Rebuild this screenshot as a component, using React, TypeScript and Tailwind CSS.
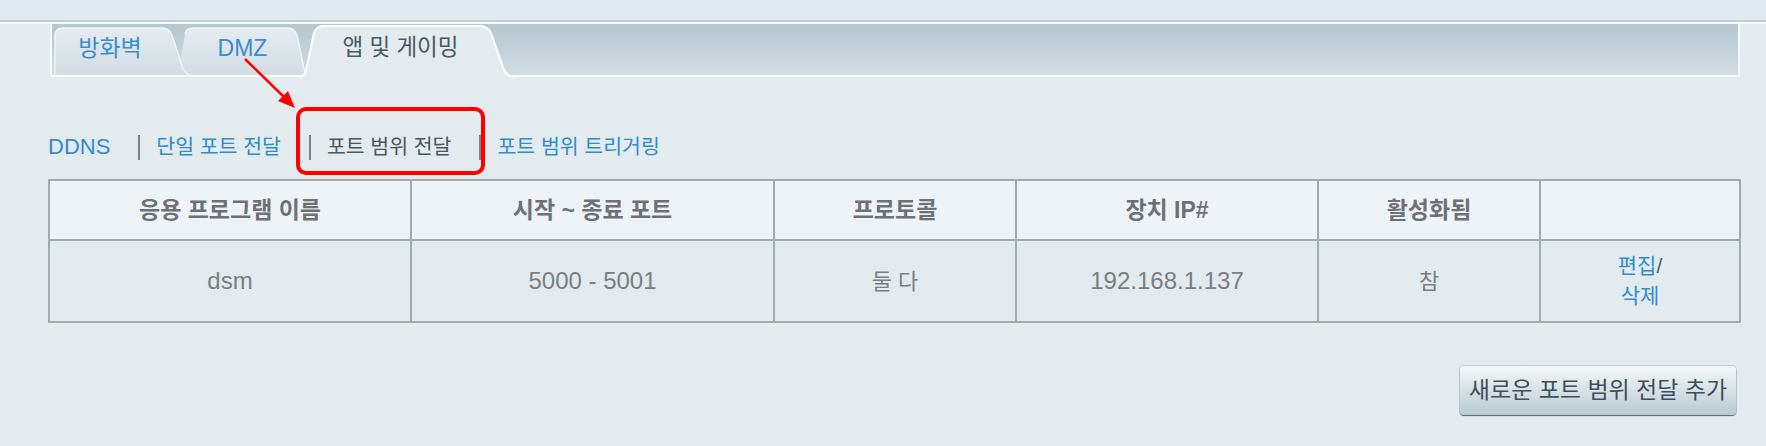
import React from 'react'

const font = "font-['Liberation_Sans','Noto_Sans_CJK_KR',sans-serif]"

function TabShapes() {
  return (
    <svg className="absolute left-0 top-0 overflow-visible" width="500" height="53" viewBox="0 0 500 53">
      <defs>
        <linearGradient id="tabIdle" x1="0" y1="0" x2="0" y2="1">
          <stop offset="0" stopColor="#e4ebf0" />
          <stop offset="1" stopColor="#d3dde3" />
        </linearGradient>
      </defs>
      {/* DMZ tab sits underneath its neighbours */}
      <path d="M126,51 L133,10 Q134,4 141,4 L236,4 Q243,4 245,11 L252,45 Q254,51 260,51 Z" fill="url(#tabIdle)" />
      <path d="M133,10 Q134,4 141,4 L236,4 Q243,4 245,11 L252,45 Q254,51 260,51" fill="none" stroke="#f0f4f6" strokeWidth="1.5" />
      <path d="M3,51 L3,12 Q3,4 11,4 L110,4 Q117,4 120,11 L131,45 Q134,51 140,51 Z" fill="url(#tabIdle)" />
      <path d="M3,51 L3,12 Q3,4 11,4 L110,4 Q117,4 120,11 L131,45 Q134,51 140,51" fill="none" stroke="#f0f4f6" strokeWidth="1.5" />
      <path d="M246,53 Q252,53 254,47 L262,9 Q264,2 272,2 L428,2 Q436,2 439,9 L452,46 Q455,53 463,53 Z" fill="#e4ebef" />
      <path d="M246,53 Q252,53 254,47 L262,9 Q264,2 272,2 L428,2 Q436,2 439,9 L452,46 Q455,53 463,53" fill="none" stroke="#ffffff" strokeWidth="2" />
    </svg>
  )
}

function Sep() {
  return <span className="ml-[28px] mr-[16px] h-[25px] w-[2px] bg-[#7f8284]" />
}

export default function App() {
  return (
    <div className={`relative h-[446px] w-full overflow-hidden bg-[#e4ebef] ${font}`}>
      <div className="h-[20px] bg-[#e0e9ef]" />
      <div className="h-[2px] bg-[#c4cdd4]" />
      <div className="h-[2px] bg-[#f6f9fa]" />

      <div className="pl-[48px] pr-[26px]">
        {/* tab bar */}
        <div className="relative ml-[2px] h-[53px] border-x-2 border-b-2 border-[#f7fafb] bg-gradient-to-b from-[#b4c6ce] to-[#d1dee4]">
          <TabShapes />
          <div className="relative flex pl-[3px] pt-[9px] leading-[30px]">
            <div className="w-[110px] text-center text-[23px] text-[#3a8dcf]">방화벽</div>
            <div className="w-[155px] text-center text-[23px] text-[#3a8dcf]">DMZ</div>
            <div className="w-[161px] text-center text-[22.5px] text-[#4a5863]">앱 및 게이밍</div>
          </div>
        </div>

        {/* sub navigation */}
        <div className="mt-[57px] flex h-[26px] items-center leading-none">
          <span className="text-[22px] text-[#2f8cce]">DDNS</span>
          <Sep />
          <span className="text-[20.5px] text-[#2f8cce]">단일 포트 전달</span>
          <Sep />
          <span className="text-[20.5px] text-[#4a5660]">포트 범위 전달</span>
          <Sep />
          <span className="text-[20.5px] text-[#2f8cce]">포트 범위 트리거링</span>
        </div>

        <table className="mt-[19px] w-[1691px] table-fixed border-collapse border-2 border-[#9eabb3]">
          <colgroup>
            <col className="w-[362px]" />
            <col className="w-[363px]" />
            <col className="w-[242px]" />
            <col className="w-[302px]" />
            <col className="w-[222px]" />
            <col className="w-[200px]" />
          </colgroup>
          <thead>
            <tr className="h-[60px] bg-[#eef3f7] text-[23px] font-bold text-[#6d7175]">
              <th className="border-2 border-[#9eabb3]">응용 프로그램 이름</th>
              <th className="border-2 border-[#9eabb3]">시작 ~ 종료 포트</th>
              <th className="border-2 border-[#9eabb3]">프로토콜</th>
              <th className="border-2 border-[#9eabb3]">장치 IP#</th>
              <th className="border-2 border-[#9eabb3]">활성화됨</th>
              <th className="border-2 border-[#9eabb3]" />
            </tr>
          </thead>
          <tbody>
            <tr className="h-[82px] bg-[#e3eaee] text-center text-[24px] text-[#7a7e82]">
              <td className="border-2 border-[#9eabb3]">dsm</td>
              <td className="border-2 border-[#9eabb3]">5000 - 5001</td>
              <td className="border-2 border-[#9eabb3] text-[22px]">둘 다</td>
              <td className="border-2 border-[#9eabb3]">192.168.1.137</td>
              <td className="border-2 border-[#9eabb3] text-[22px]">참</td>
              <td className="border-2 border-[#9eabb3] text-[21px] leading-[30px]">
                <div>
                  <span className="text-[#2f8cce]">편집</span>
                  <span className="text-[#4f5b64]">/</span>
                </div>
                <div className="text-[#2f8cce]">삭제</div>
              </td>
            </tr>
          </tbody>
        </table>

        <div className="mt-[43px] flex justify-end pr-[4px]">
          <button className="h-[49px] w-[276px] rounded-[4px] bg-gradient-to-b from-[#f5f8fa] to-[#b8cad1] text-[23px] text-[#3e4e5a] shadow-[0_1px_1px_rgba(40,55,65,0.7),0_0_0_1px_rgba(130,150,160,0.35)]">
            새로운 포트 범위 전달 추가
          </button>
        </div>
      </div>

      {/* annotation: red box + arrow */}
      <div className="absolute left-[296px] top-[107px] h-[68px] w-[189px] rounded-[10px] border-4 border-[#ff0000]" />
      <svg className="pointer-events-none absolute left-0 top-0" width="1766" height="446">
        <line x1="245" y1="59" x2="284" y2="97" stroke="#ff0000" strokeWidth="2.5" />
        <polygon points="295,108 278,101 288,91" fill="#ff0000" />
      </svg>
    </div>
  )
}
